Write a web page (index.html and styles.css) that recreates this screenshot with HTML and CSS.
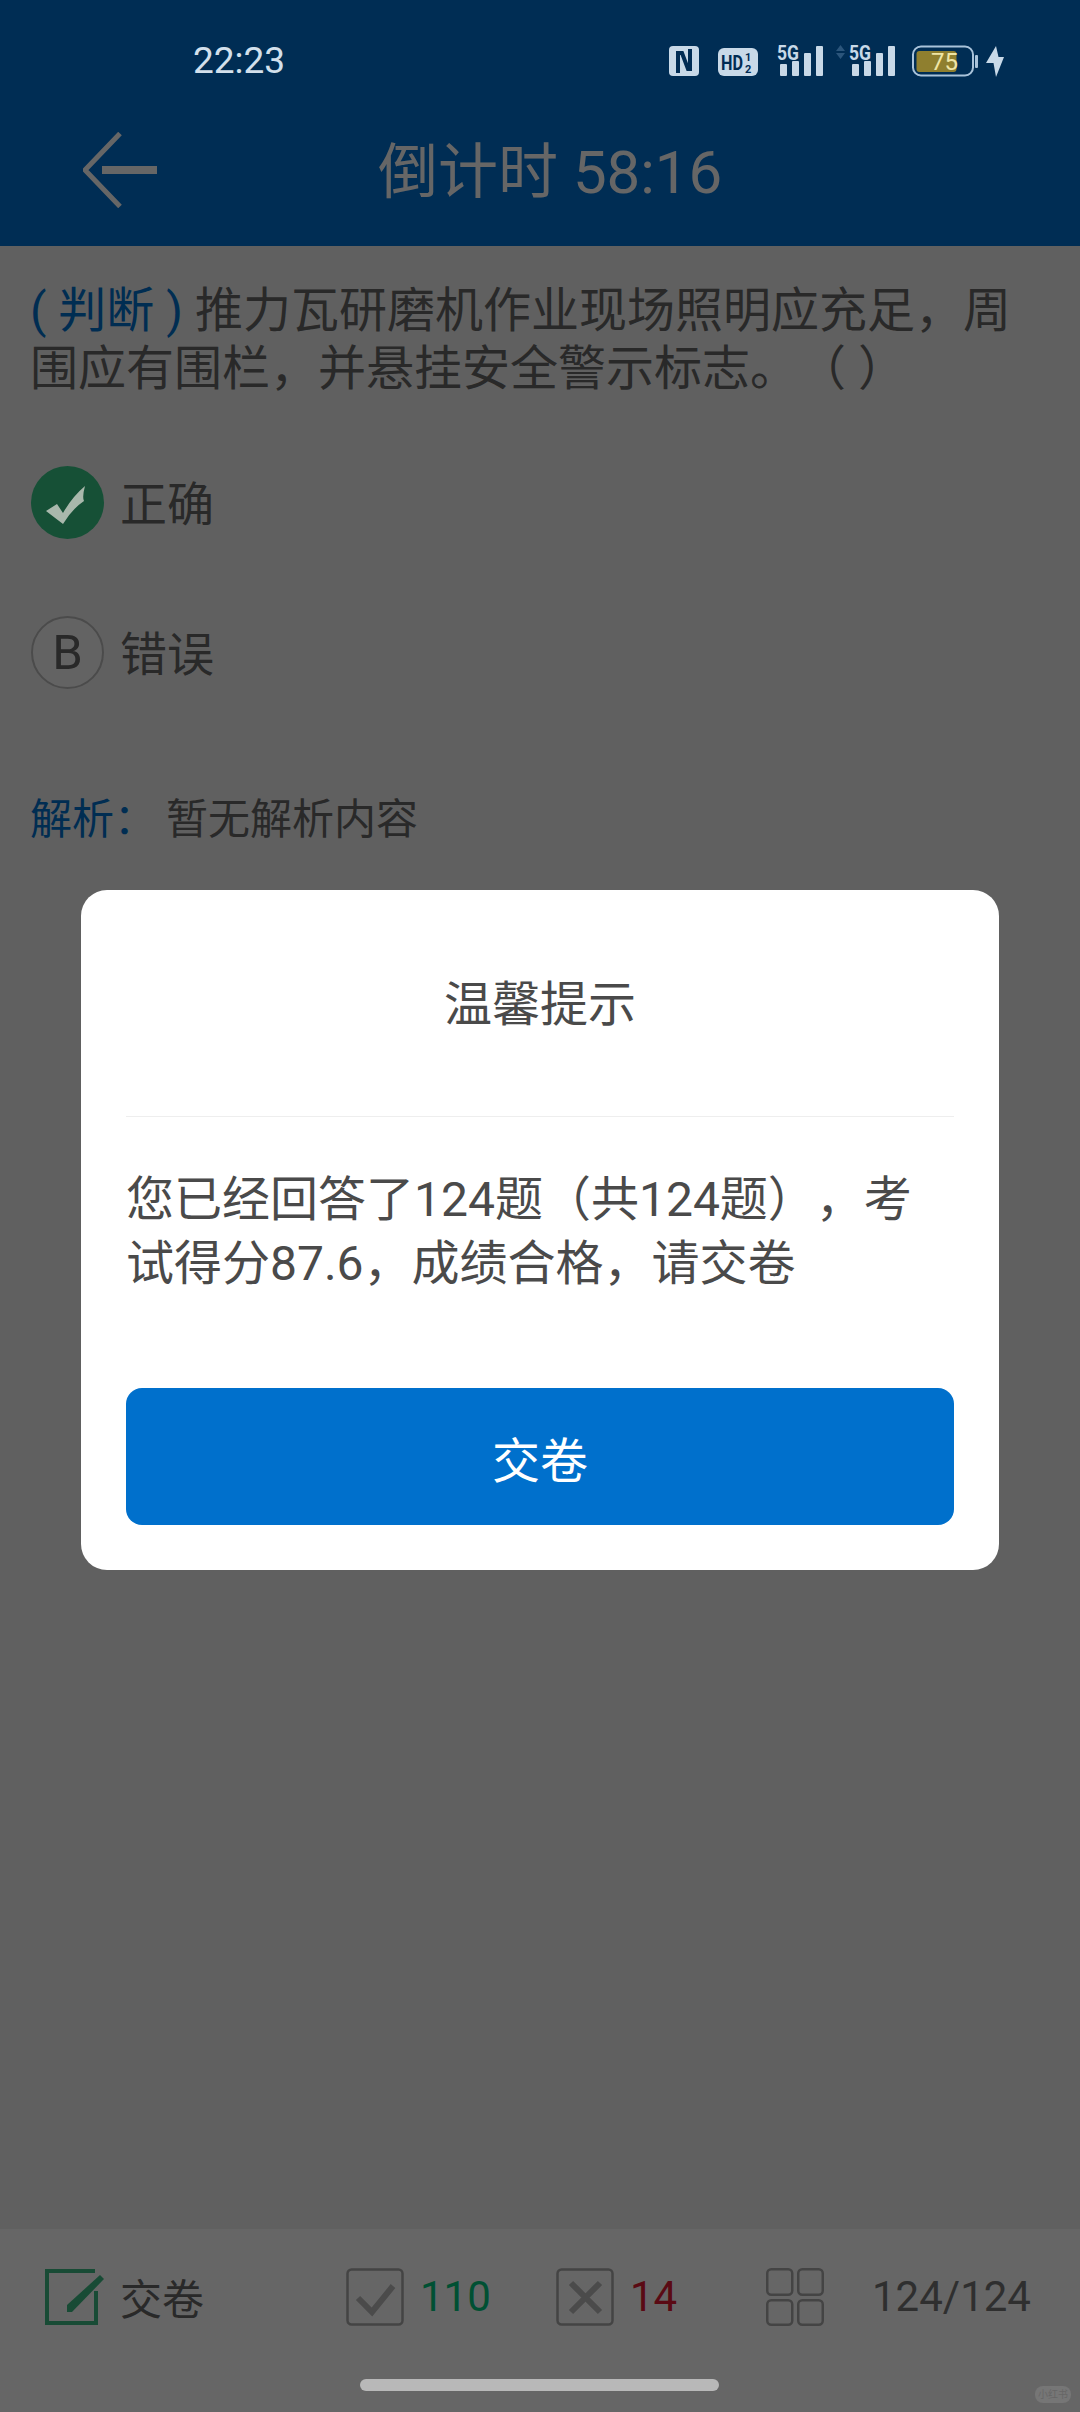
FILE: index.html
```html
<!DOCTYPE html>
<html lang="zh-CN">
<head>
<meta charset="utf-8">
<title>倒计时</title>
<link rel="stylesheet" href="styles.css">
</head>
<body>
<div class="page">
  <header class="header">
    <div class="status">
      <span class="time">22:23</span>
      <div class="status-icons">
        <svg class="ic-nfc" width="30" height="38" viewBox="0 -4 30 38"><rect y="2" width="30" height="30" rx="4" fill="#c8d9e8"/><path d="M9 29V9h4l6 16h2V5" fill="none" stroke="#002c54" stroke-width="4"/></svg>
        <svg class="ic-hd" width="40" height="38" viewBox="0 -4 40 38"><rect y="4" width="40" height="28" rx="6" fill="#c8d9e8"/><text class="svg-bold" x="3" y="26" font-size="21" textLength="22" lengthAdjust="spacingAndGlyphs" fill="#002c54">HD</text><text class="svg-bold" x="27" y="17" font-size="11" fill="#002c54">1</text><text class="svg-bold" x="27" y="29" font-size="11" fill="#002c54">2</text></svg>
        <svg class="ic-sig" width="46" height="38" viewBox="0 -4 46 38"><text class="svg-bold" x="0" y="16" font-size="20" textLength="22" lengthAdjust="spacingAndGlyphs" fill="#c8d9e8">5G</text><rect x="3" y="20" width="7" height="12" rx="1" fill="#c8d9e8"/><rect x="15" y="17" width="7" height="15" rx="1" fill="#c8d9e8"/><rect x="27" y="9" width="7" height="23" rx="1" fill="#c8d9e8"/><rect x="39" y="2" width="7" height="30" rx="1" fill="#c8d9e8"/></svg>
        <svg class="ic-sig2" width="59" height="38" viewBox="0 -4 59 38"><path d="M4.500 1L9 7H0zM0 9h9l-4.500 6z" fill="#2b557b"/><text class="svg-bold" x="13" y="16" font-size="20" textLength="22" lengthAdjust="spacingAndGlyphs" fill="#c8d9e8">5G</text><rect x="16" y="20" width="7" height="12" rx="1" fill="#c8d9e8"/><rect x="28" y="17" width="7" height="15" rx="1" fill="#c8d9e8"/><rect x="40" y="9" width="7" height="23" rx="1" fill="#c8d9e8"/><rect x="52" y="2" width="7" height="30" rx="1" fill="#c8d9e8"/></svg>
        <svg class="ic-batt" width="66" height="38" viewBox="0 -4 66 38"><rect x="1" y="2.500" width="60" height="29" rx="8" fill="none" stroke="#a9c3da" stroke-width="2"/><rect x="4.500" y="7" width="40" height="21" rx="3" fill="#8f7f2f"/><text class="svg-reg" x="19" y="26" font-size="24" fill="#efe6a6">75</text><rect x="63" y="11" width="3" height="13" rx="1" fill="#a9c3da"/></svg>
        <svg class="ic-bolt" width="18" height="38" viewBox="0 -4 18 38"><path d="M10 2L0 19h7.500L10 33l8-20h-5.500z" fill="#c8d9e8"/></svg>
      </div>
    </div>
    <nav class="nav">
      <svg class="back" width="74" height="76" viewBox="0 0 74 76"><path d="M37 1.500L2 38l35 36.500" fill="none" stroke="#fff" stroke-width="5"/><rect x="19" y="34" width="55" height="8" fill="#fff"/></svg>
      <h1 class="nav-title">倒计时 58:16</h1>
    </nav>
  </header>

  <main class="main">
    <p class="question"><span class="tag">( 判断 )</span> 推力瓦研磨机作业现场照明应充足，周围应有围栏，并悬挂安全警示标志。（ ）</p>
    <div class="option">
      <span class="badge badge-ok"><svg class="tick" width="72" height="72" viewBox="0 0 72 72"><path d="M14 44l11-7 6 9q9-16 22-27-3 11-1 15-12 8-21 23z" fill="#a9b8ac"/></svg></span>
      <span class="option-text">正确</span>
    </div>
    <div class="option">
      <span class="badge badge-b">B</span>
      <span class="option-text">错误</span>
    </div>
    <p class="analysis"><span class="analysis-label">解析：</span><span class="analysis-text">暂无解析内容</span></p>
  </main>

  <footer class="bottom">
    <div class="group group-submit">
      <svg width="60" height="56" viewBox="0 0 60 56"><path d="M50 2H2v52h49V22" fill="none" stroke="#3cbc84" stroke-width="4"/><path d="M22 36L55 6l4 4-32 33h-5z" fill="#3cbc84"/></svg>
      <span class="bottom-text">交卷</span>
    </div>
    <div class="group">
      <svg width="58" height="58" viewBox="0 0 58 58"><rect x="1.500" y="1.500" width="55" height="55" rx="4" fill="none" stroke="#aaa" stroke-width="2.500"/><path d="M12 30l14 14 21-26" fill="none" stroke="#bbb" stroke-width="6"/></svg>
      <span class="num num-ok">110</span>
    </div>
    <div class="group">
      <svg width="58" height="58" viewBox="0 0 58 58"><rect x="1.500" y="1.500" width="55" height="55" rx="4" fill="none" stroke="#aaa" stroke-width="2.500"/><path d="M15 15l29 29M44 15L15 44" fill="none" stroke="#bbb" stroke-width="6"/></svg>
      <span class="num num-bad">14</span>
    </div>
    <div class="group group-grid">
      <svg width="58" height="58" viewBox="0 0 58 58"><g fill="none" stroke="#aaa" stroke-width="2.500"><rect x="1.250" y="1.250" width="25" height="25.500" rx="4"/><rect x="32.250" y="1.250" width="24.500" height="25.500" rx="4"/><rect x="1.250" y="32.250" width="25" height="24.500" rx="4"/><rect x="32.250" y="32.250" width="24.500" height="24.500" rx="4"/></g></svg>
      <span class="num num-count">124/124</span>
    </div>
  </footer>

  <div class="scrim">
    <section class="dialog">
      <h2 class="dialog-title">温馨提示</h2>
      <p class="dialog-body">您已经回答了124题（共124题），考试得分87.6，成绩合格，请交卷</p>
      <button class="dialog-btn">交卷</button>
    </section>
  </div>

  <div class="home-bar"></div>
  <div class="watermark">小红书</div>
</div>
</body>
</html>
```
FILE: styles.css
```css
* { box-sizing: border-box; }
html, body { margin: 0; padding: 0; }
body {
  font-family: Roboto, "Noto Sans CJK SC", sans-serif;
  text-spacing-trim: space-all;
}

.page {
  position: relative;
  width: 1080px;
  height: 2412px;
  overflow: hidden;
  display: flex;
  flex-direction: column;
  background: #f0f0f0;
}

.header { height: 246px; background: #0070d2; flex: none; }

.status {
  position: relative;
  z-index: 2;
  height: 100px;
  padding: 40px 76px 0 193px;
  display: flex;
  align-items: flex-start;
  justify-content: space-between;
}
.time { margin-top: 4px; font-size: 37px; line-height: 34px; color: #d3e0ec; }
.status-icons { display: flex; }
.status-icons svg { display: block; }
.ic-hd, .ic-sig { margin-left: 19px; }
.ic-sig2 { margin-left: 13px; }
.ic-batt { margin-left: 17px; }
.ic-bolt { margin-left: 8px; }
.svg-bold { font-family: Roboto, sans-serif; font-weight: 700; }
.svg-reg { font-family: Roboto, sans-serif; font-weight: 400; }

.nav {
  height: 146px;
  padding-left: 83px;
  display: flex;
  align-items: center;
}
.back { flex: none; margin-top: -6px; }
.nav-title {
  margin: 0 0 0 221px;
  font-size: 60px;
  line-height: 70px;
  font-weight: 400;
  color: #fff;
  white-space: nowrap;
}

.main { flex: 1; padding: 36px 30px 0; color: #666; }
.question { margin: 0 0 68px; font-size: 48px; line-height: 58px; }
.tag { color: #0070cc; }
.option { display: flex; align-items: center; height: 73px; margin-bottom: 77px; }
.badge {
  width: 73px;
  height: 73px;
  border-radius: 50%;
  flex: none;
  margin-left: 1px;
  display: flex;
  align-items: center;
  justify-content: center;
}
.badge-ok { background: #38c888; }
.tick { display: block; position: relative; z-index: 2; }
.badge-b { border: 2px solid #bbb; background: #f8f8f8; font-size: 49px; }
.option-text { margin: 4px 0 0 16px; font-size: 47px; line-height: 57px; }
.analysis { margin: 106px 0 0; font-size: 42px; line-height: 50px; }
.analysis-label { color: #0070cc; }
.analysis-text { margin-left: 10px; }

.bottom {
  flex: none;
  height: 183px;
  padding: 39px 0 0 45px;
  background: #fff;
  display: grid;
  grid-template-columns: 301px 210px 210px 1fr;
  align-items: start;
}
.group { display: flex; align-items: center; height: 58px; gap: 16px; }
.group svg { display: block; flex: none; }
.group-submit { gap: 15px; }
.group-grid { gap: 48px; }
.bottom-text { margin-top: -2px; font-size: 42px; color: #666; }
.num { font-size: 42px; line-height: 58px; }
.num-ok { color: #00c880; }
.num-bad { color: #e01a33; }
.num-count { color: #777; }

.scrim {
  position: absolute;
  inset: 0;
  z-index: 1;
  padding-top: 890px;
  background: rgba(0, 0, 0, 0.6);
  display: flex;
  justify-content: center;
  align-items: flex-start;
}
.dialog {
  width: 918px;
  height: 680px;
  padding: 0 45px;
  background: #fff;
  border-radius: 26px;
  display: flex;
  flex-direction: column;
}
.dialog-title {
  margin: 0;
  height: 227px;
  padding-top: 85px;
  font-size: 48px;
  line-height: 60px;
  font-weight: 400;
  text-align: center;
  color: #4a4a4a;
  border-bottom: 1px solid #eee;
}
.dialog-body {
  margin: 51px 0 0;
  height: 128px;
  font-size: 48px;
  line-height: 64px;
  color: #4a4a4a;
}
.dialog-btn {
  margin-top: 92px;
  height: 137px;
  border: 0;
  border-radius: 16px;
  background: #0070cc;
  color: #fff;
  font-family: inherit;
  font-size: 48px;
}

.home-bar {
  position: absolute;
  z-index: 2;
  left: 360px;
  top: 2379px;
  width: 359px;
  height: 12px;
  border-radius: 6px;
  background: #b8b8b8;
}
.watermark {
  position: absolute;
  z-index: 2;
  left: 1035px;
  top: 2386px;
  width: 36px;
  height: 17px;
  border-radius: 8px;
  background: #767676;
  color: #666;
  font-size: 10px;
  line-height: 17px;
  text-align: center;
  white-space: nowrap;
}
```
